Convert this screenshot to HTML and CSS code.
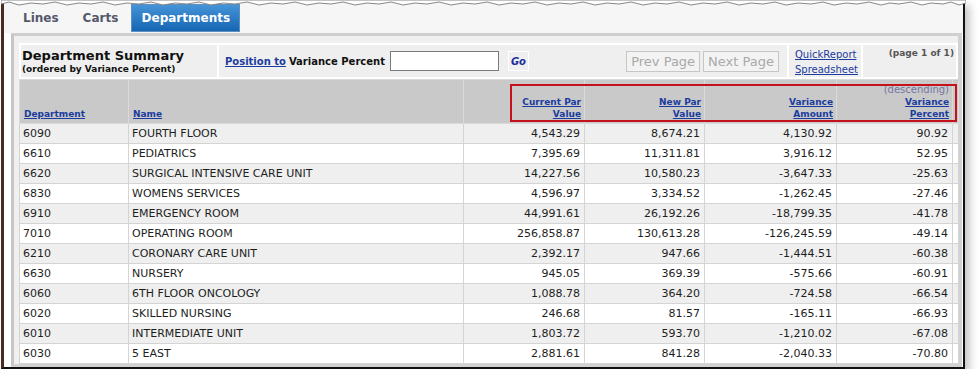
FILE: index.html
```html
<!DOCTYPE html>
<html lang="en">
<head>
    <meta charset="UTF-8">
    <title>Department Summary</title>
    <link rel="stylesheet" href="styles.css">
</head>
<body>
    <div class="shot">
        <svg class="tear" width="965" height="7" viewBox="0 0 965 7">
            <path d="M0 0 H965 V3 L958 5 L950 2 L942 4 L930 3 L921 5 L910 2 L898 4 L889 3 L880 5 L868 2 L856 4 L845 3 L833 5 L822 2 L810 4 L797 3 L785 5 L774 2 L762 4 L750 3 L738 5 L726 2 L714 4 L702 3 L690 5 L678 2 L666 4 L654 3 L642 5 L630 2 L618 4 L606 3 L594 5 L582 2 L570 4 L558 3 L546 5 L534 2 L522 4 L510 3 L498 5 L486 2 L474 4 L462 3 L450 5 L438 2 L426 4 L414 3 L402 5 L390 2 L378 4 L366 3 L354 5 L342 2 L330 4 L318 3 L306 5 L294 2 L282 4 L270 3 L258 5 L246 2 L234 4 L222 3 L210 5 L198 2 L186 4 L174 3 L162 5 L150 2 L138 4 L126 3 L114 5 L102 2 L90 4 L78 3 L66 5 L54 2 L42 4 L30 3 L18 5 L8 2 L0 4 Z" fill="#fff" stroke="#7a7a7a" stroke-width="0.9"/>
        </svg>

        <div class="tabs">
            <a class="tab">Lines</a>
            <a class="tab">Carts</a>
            <a class="tab active">Departments</a>
        </div>

        <div class="panel">
            <div class="toolbar">
                <div class="cell title">
                    <div class="title-main">Department Summary</div>
                    <div class="title-sub">(ordered by Variance Percent)</div>
                </div>
                <div class="cell position">
                    <div class="pos-group">
                        <a class="link">Position to</a>
                        <span class="pos-label">Variance Percent</span>
                        <input class="pos-input" type="text">
                        <a class="go">Go</a>
                    </div>
                    <div class="pager">
                        <button class="page-btn" disabled>Prev Page</button>
                        <button class="page-btn" disabled>Next Page</button>
                    </div>
                </div>
                <div class="cell reports">
                    <a class="report-link">QuickReport</a>
                    <a class="report-link">Spreadsheet</a>
                </div>
                <div class="cell pageinfo">(page 1 of 1)</div>
            </div>

            <table class="grid">
                <colgroup>
                    <col class="c-dept">
                    <col class="c-name">
                    <col class="c-cur">
                    <col class="c-new">
                    <col class="c-amt">
                    <col class="c-pct">
                    <col class="c-fill">
                </colgroup>
                <thead>
                    <tr>
                        <th class="left"><a class="link">Department</a></th>
                        <th class="left"><a class="link">Name</a></th>
                        <th><a class="link">Current Par<br>Value</a></th>
                        <th><a class="link">New Par<br>Value</a></th>
                        <th><a class="link">Variance<br>Amount</a></th>
                        <th><span class="sort">(descending)</span><br><a class="link">Variance<br>Percent</a></th>
                        <th></th>
                    </tr>
                </thead>
                <tbody>
                    <tr><td>6090</td><td>FOURTH FLOOR</td><td class="num">4,543.29</td><td class="num">8,674.21</td><td class="num">4,130.92</td><td class="num">90.92</td><td></td></tr>
                    <tr><td>6610</td><td>PEDIATRICS</td><td class="num">7,395.69</td><td class="num">11,311.81</td><td class="num">3,916.12</td><td class="num">52.95</td><td></td></tr>
                    <tr><td>6620</td><td>SURGICAL INTENSIVE CARE UNIT</td><td class="num">14,227.56</td><td class="num">10,580.23</td><td class="num">-3,647.33</td><td class="num">-25.63</td><td></td></tr>
                    <tr><td>6830</td><td>WOMENS SERVICES</td><td class="num">4,596.97</td><td class="num">3,334.52</td><td class="num">-1,262.45</td><td class="num">-27.46</td><td></td></tr>
                    <tr><td>6910</td><td>EMERGENCY ROOM</td><td class="num">44,991.61</td><td class="num">26,192.26</td><td class="num">-18,799.35</td><td class="num">-41.78</td><td></td></tr>
                    <tr><td>7010</td><td>OPERATING ROOM</td><td class="num">256,858.87</td><td class="num">130,613.28</td><td class="num">-126,245.59</td><td class="num">-49.14</td><td></td></tr>
                    <tr><td>6210</td><td>CORONARY CARE UNIT</td><td class="num">2,392.17</td><td class="num">947.66</td><td class="num">-1,444.51</td><td class="num">-60.38</td><td></td></tr>
                    <tr><td>6630</td><td>NURSERY</td><td class="num">945.05</td><td class="num">369.39</td><td class="num">-575.66</td><td class="num">-60.91</td><td></td></tr>
                    <tr><td>6060</td><td>6TH FLOOR ONCOLOGY</td><td class="num">1,088.78</td><td class="num">364.20</td><td class="num">-724.58</td><td class="num">-66.54</td><td></td></tr>
                    <tr><td>6020</td><td>SKILLED NURSING</td><td class="num">246.68</td><td class="num">81.57</td><td class="num">-165.11</td><td class="num">-66.93</td><td></td></tr>
                    <tr><td>6010</td><td>INTERMEDIATE UNIT</td><td class="num">1,803.72</td><td class="num">593.70</td><td class="num">-1,210.02</td><td class="num">-67.08</td><td></td></tr>
                    <tr><td>6030</td><td>5 EAST</td><td class="num">2,881.61</td><td class="num">841.28</td><td class="num">-2,040.33</td><td class="num">-70.80</td><td></td></tr>
                </tbody>
            </table>
        </div>

        <div class="callout"></div>
    </div>
</body>
</html>
```

FILE: styles.css
```css
body {
    margin: 0;
    background: #fff;
    font-family: "DejaVu Sans", Verdana, sans-serif;
    color: #222;
}

.shot {
    position: relative;
    width: 959px;
    margin-left: 1px;
    background: #fff;
    border-left: 3px solid #4a2b1f;
    border-right: 2px solid #111;
    border-bottom: 2px solid #111;
    box-shadow: 5px 5px 8px rgba(0, 0, 0, 0.22);
}

.tear {
    position: absolute;
    top: 0;
    left: -3px;
    z-index: 5;
}

/* tabs */
.tabs {
    height: 32px;
    padding: 0 0 1px 7px;
    display: flex;
    align-items: flex-end;
    background: #f6f6f6;
}

.tab {
    height: 28px;
    padding: 0 12px;
    display: flex;
    align-items: center;
    font-size: 12px;
    font-weight: bold;
    color: #55586a;
}

.tab.active {
    margin-left: 1px;
    color: #fff;
    background: linear-gradient(to bottom, #4594d8, #1565b2);
    border: 1px solid #5d8fc0;
    box-sizing: border-box;
    width: 109px;
    justify-content: center;
}

/* panel */
.panel {
    margin: 0 1px 0 7px;
    padding: 7px 0 0 5px;
    background: #f0f0f0;
    border-top: 3px solid #cfcfcf;
    border-left: 3px solid #c6c6c6;
    border-right: 4px solid #d2d2d2;
    border-bottom: 3px solid #d2d2d2;
}

.toolbar {
    width: 939px;
    box-sizing: border-box;
    padding: 2px;
    display: flex;
    gap: 2px;
    background: #fff;
}

.cell {
    height: 32px;
    background: #efefef;
}

.title {
    width: 196px;
    padding: 3px 0 0 1px;
    box-sizing: border-box;
}

.title-main {
    font-size: 13px;
    font-weight: bold;
    color: #111;
    line-height: 15px;
}

.title-sub {
    font-size: 9px;
    font-weight: bold;
    color: #111;
    line-height: 12px;
}

.position {
    flex: 1;
    display: flex;
    align-items: center;
    justify-content: space-between;
    padding: 0 8px 0 6px;
}

.pos-group {
    display: flex;
    align-items: center;
}

.link {
    color: #1b3c9e;
    text-decoration: underline;
    font-weight: bold;
}

.pos-group .link,
.pos-label {
    font-size: 10px;
}

.pos-label {
    font-weight: bold;
    color: #111;
    margin-left: 3px;
}

.pos-input {
    width: 109px;
    height: 20px;
    box-sizing: border-box;
    margin: 0 0 0 5px;
    border: 1px solid #7a7a7a;
    background: #fff;
}

.go {
    margin-left: 9px;
    width: 21px;
    height: 20px;
    box-sizing: border-box;
    border: 1px solid #fff;
    display: flex;
    align-items: center;
    justify-content: center;
    font-size: 10px;
    font-weight: bold;
    font-style: italic;
    color: #1b2c9e;
}

.pager {
    display: flex;
    gap: 3px;
}

.page-btn {
    height: 21px;
    padding: 0 4px;
    font-family: "DejaVu Sans", Verdana, sans-serif;
    font-size: 13px;
    color: #a9a9a9;
    background: #f3f3f3;
    border: 1px solid #c6c6c6;
}

.reports {
    width: 72px;
    padding: 3px 0 0 6px;
    box-sizing: border-box;
    display: flex;
    flex-direction: column;
    gap: 2px;
}

.report-link {
    font-size: 10px;
    line-height: 13px;
    color: #1b3c9e;
    text-decoration: underline;
}

.pageinfo {
    flex: 0 0 93px;
    padding: 3px 2px 0 0;
    box-sizing: border-box;
    text-align: right;
    font-size: 9px;
    font-weight: bold;
    color: #555;
}

/* grid */
.grid {
    width: 939px;
    border-collapse: collapse;
    table-layout: fixed;
    font-size: 11px;
}

.c-dept { width: 109px; }
.c-name { width: 335px; }
.c-cur { width: 121px; }
.c-new { width: 120px; }
.c-amt { width: 132px; }
.c-pct { width: 116px; }
.c-fill { width: 6px; }

.grid th {
    height: 40px;
    padding: 0 3px 3px 4px;
    vertical-align: bottom;
    text-align: right;
    background: #c8c9c8;
    border: 1px solid #dadada;
    font-size: 9px;
    line-height: 12px;
}

.grid th.left {
    text-align: left;
}

.sort {
    font-size: 10px;
    font-weight: normal;
    color: #7676a4;
}

.grid td {
    height: 19px;
    padding: 0 4px 0 3px;
    border: 1px solid #d4d4d4;
    color: #1e1e1e;
    white-space: nowrap;
}

.grid td.num {
    text-align: right;
}

.grid tbody tr:nth-child(odd) td {
    background: #efefef;
}

.grid tbody tr:nth-child(even) td {
    background: #fff;
}

/* red highlight drawn over the header */
.callout {
    position: absolute;
    left: 506px;
    top: 84px;
    width: 447px;
    height: 38px;
    box-sizing: border-box;
    border: 2px solid #c4111b;
}
```
